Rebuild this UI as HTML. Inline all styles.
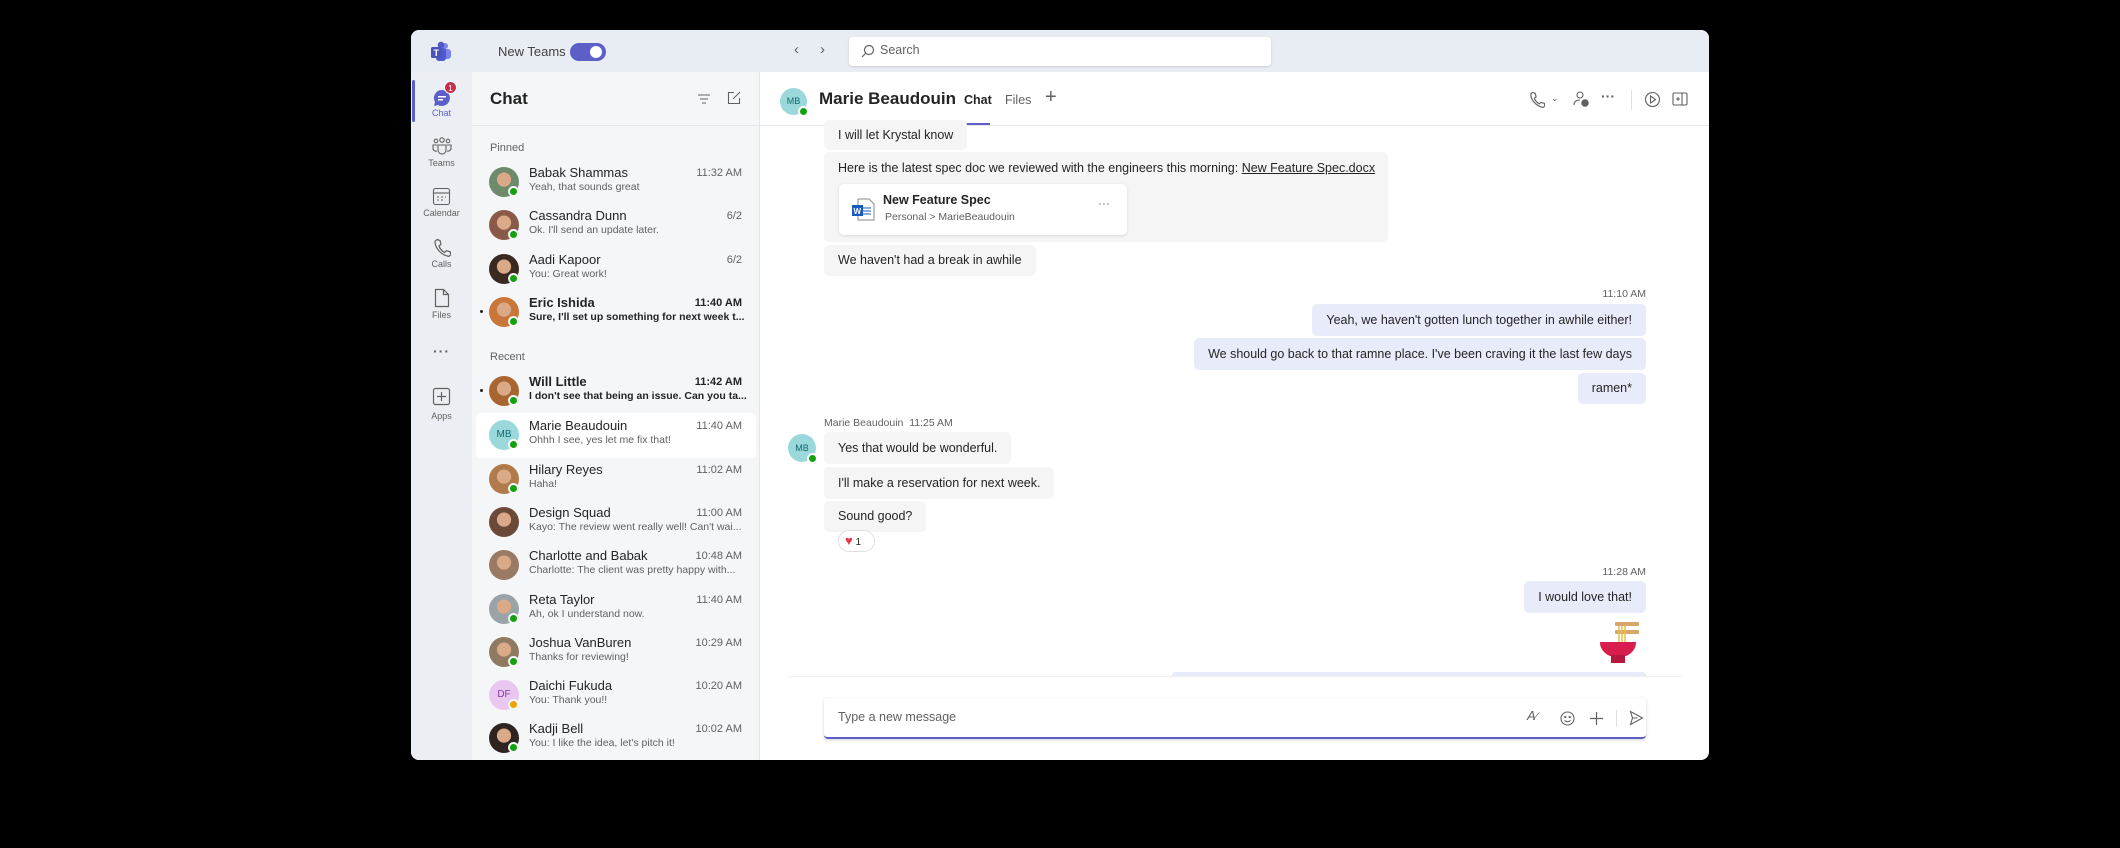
<!DOCTYPE html>
<html><head><meta charset="utf-8"><style>
*{margin:0;padding:0;box-sizing:border-box}
body{width:2120px;height:848px;background:#000;font-family:"Segoe UI","Liberation Sans",sans-serif;color:#242424;position:relative;overflow:hidden}
.a{position:absolute}
.win{left:411px;top:30px;width:1298px;height:730px;background:#fff;border-radius:8px;overflow:hidden}
.tb{left:0;top:0;width:1298px;height:42px;background:#e8ecf3}
.rail{left:0;top:42px;width:61px;height:688px;background:#ebeef3}
.list{left:61px;top:42px;width:288px;height:688px;background:#f5f6f8;border-right:1px solid #e3e5e9}
.ri{left:0;width:61px;text-align:center;font-size:9px;color:#616161}
.nm{font-size:13px;color:#242424;white-space:nowrap}
.pv{font-size:10.5px;color:#616161;white-space:nowrap}
.tm{font-size:11px;color:#616161;text-align:right}
.b .nm,.b .pv,.b .tm{font-weight:bold;color:#242424}
.av{width:30px;height:30px;border-radius:50%}
.st{width:11px;height:11px;border-radius:50%;background:#13a10e;border:2px solid #f5f6f8}
.bub{background:#f5f5f5;border-radius:5px;font-size:12.5px;padding:0 14px;line-height:32px;white-space:nowrap}
.me{background:#e8ebfa}
</style></head><body>
<div class="a win">
 <div class="a tb"></div>
 <svg class="a" style="left:19px;top:11px" width="22" height="22" viewBox="0 0 22 22"><circle cx="15" cy="5" r="3" fill="#7b83eb"/><circle cx="11" cy="4" r="3.3" fill="#5059c9"/><rect x="11" y="8" width="10" height="10" rx="3" fill="#7b83eb"/><rect x="6" y="7" width="10" height="13" rx="3" fill="#5059c9"/><rect x="1" y="6" width="11" height="11" rx="1.5" fill="#4b53bc"/><text x="3.5" y="15" font-size="9" font-weight="bold" fill="#fff" font-family="Liberation Sans">T</text></svg>
 <div class="a" style="left:87px;top:14px;font-size:13px;color:#424242">New Teams</div>
 <div class="a" style="left:159px;top:13px;width:36px;height:18px;border-radius:9px;background:#5b5fc7"><div class="a" style="left:20px;top:3px;width:12px;height:12px;border-radius:50%;background:#fff"></div></div>
 <div class="a" style="left:383px;top:11px;font-size:15px;color:#616161">&#8249;</div>
 <div class="a" style="left:409px;top:11px;font-size:15px;color:#616161">&#8250;</div>
 <div class="a" style="left:438px;top:7px;width:422px;height:29px;background:#fff;border-radius:4px;box-shadow:0 1px 2px rgba(0,0,0,.12)">
  <svg class="a" style="left:12px;top:7px" width="14" height="14" viewBox="0 0 14 14"><circle cx="8" cy="6" r="4.5" fill="none" stroke="#616161" stroke-width="1.2"/><path d="M5 9L1 13" stroke="#616161" stroke-width="1.2"/></svg>
  <div class="a" style="left:31px;top:6px;font-size:12.5px;color:#616161">Search</div>
 </div>

 <div class="a rail"></div>
 <div class="a" style="left:1px;top:50px;width:3px;height:42px;background:#5b5fc7;border-radius:2px"></div>
 <svg class="a" style="left:20px;top:57px" width="22" height="22" viewBox="0 0 22 22"><path d="M11 3a8 8 0 1 1-4 15l-4 1 1-4A8 8 0 0 1 11 3z" fill="#5b5fc7"/><rect x="7" y="9" width="8" height="1.5" fill="#fff"/><rect x="7" y="12" width="5" height="1.5" fill="#fff"/></svg>
 <div class="a" style="left:33px;top:51px;width:13px;height:13px;border-radius:50%;background:#c4314b;color:#fff;font-size:8px;text-align:center;line-height:13px;border:1px solid #fff">1</div>
 <div class="a ri" style="top:78px;color:#5b5fc7">Chat</div>
 <svg class="a" style="left:21px;top:106px" width="20" height="20" viewBox="0 0 20 20" fill="none" stroke="#616161" stroke-width="1.1"><circle cx="10" cy="4" r="2.2"/><circle cx="4" cy="5" r="1.8"/><circle cx="16" cy="5" r="1.8"/><path d="M6 9h8v5a4 4 0 0 1-8 0z"/><path d="M5 9H1v3a3 3 0 0 0 4 3M15 9h4v3a3 3 0 0 1-4 3"/></svg>
 <div class="a ri" style="top:128px">Teams</div>
 <svg class="a" style="left:21px;top:157px" width="19" height="19" viewBox="0 0 19 19" fill="none" stroke="#616161" stroke-width="1.1"><rect x="1.5" y="1.5" width="16" height="16" rx="2"/><path d="M1.5 6h16"/><path d="M5 10h2M9 10h2M13 10h1M5 13h2M9 13h2" /></svg>
 <div class="a ri" style="top:178px">Calendar</div>
 <svg class="a" style="left:22px;top:208px" width="18" height="19" viewBox="0 0 18 19" fill="none" stroke="#616161" stroke-width="1.2"><path d="M4 1.5l3 1 1 4-2 1.5c1 3 3 5 5.5 6.5l1.8-1.8 4 1.2.5 3-2 1.5C8 17 2 10 2 3.5z"/></svg>
 <div class="a ri" style="top:229px">Calls</div>
 <svg class="a" style="left:23px;top:258px" width="16" height="20" viewBox="0 0 16 20" fill="none" stroke="#616161" stroke-width="1.2"><path d="M1.5 1.5h8l5 5v12h-13z M9.5 1.5v5h5"/></svg>
 <div class="a ri" style="top:280px">Files</div>
 <div class="a ri" style="top:313px;font-size:14px;letter-spacing:1px;font-weight:bold">···</div>
 <svg class="a" style="left:21px;top:357px" width="19" height="19" viewBox="0 0 19 19" fill="none" stroke="#616161" stroke-width="1.2"><rect x="1.5" y="1.5" width="16" height="16" rx="2"/><path d="M9.5 5v9M5 9.5h9"/></svg>
 <div class="a ri" style="top:381px">Apps</div>

 <div class="a list"></div>
 <div class="a" style="left:61px;top:95px;width:288px;height:1px;background:#e6e8ec"></div>
 <div class="a" style="left:79px;top:59px;font-size:17px;font-weight:bold">Chat</div>
 <svg class="a" style="left:286px;top:63px" width="14" height="12" viewBox="0 0 14 12" stroke="#616161" stroke-width="1.1"><path d="M1 2h12M3 6h8M5 10h4"/></svg>
 <svg class="a" style="left:315px;top:60px" width="16" height="16" viewBox="0 0 16 16" fill="none" stroke="#616161" stroke-width="1.1"><path d="M8 2.5H2.5v11h11V8"/><path d="M7 9l7-7"/></svg>
 <div class="a" style="left:79px;top:112px;font-size:11px;color:#616161">Pinned</div>
 <div class="a" style="left:79px;top:321px;font-size:11px;color:#616161">Recent</div>
 <div class="a" style="left:65px;top:383px;width:280px;height:45px;background:#fff;border-radius:5px"></div>
 <div id="rows"></div>

 <div class="a" style="left:349px;top:95px;width:949px;height:1px;background:#e6e8ec"></div>
 <div class="a" style="left:369px;top:58px;width:27px;height:27px;border-radius:50%;background:#9ad8db;font-size:9px;color:#0e6a70;text-align:center;line-height:27px">MB</div>
 <div class="a st" style="left:387px;top:76px;border-color:#fff"></div>
 <div class="a" style="left:408px;top:59px;font-size:17px;font-weight:bold">Marie Beaudouin</div>
 <div class="a" style="left:553px;top:63px;font-size:12.5px;font-weight:600">Chat</div>
 <div class="a" style="left:553px;top:93px;width:26px;height:2px;background:#5b5fc7"></div>
 <div class="a" style="left:594px;top:63px;font-size:12.5px;color:#616161">Files</div>
 <div class="a" style="left:634px;top:56px;font-size:20px;color:#616161;font-weight:300">+</div>
 <svg class="a" style="left:1118px;top:61px" width="16" height="17" viewBox="0 0 18 19" fill="none" stroke="#616161" stroke-width="1.3"><path d="M4 1.5l3 1 1 4-2 1.5c1 3 3 5 5.5 6.5l1.8-1.8 4 1.2.5 3-2 1.5C8 17 2 10 2 3.5z"/></svg>
 <div class="a" style="left:1140px;top:63px;font-size:9px;color:#616161">&#8964;</div>
 <svg class="a" style="left:1161px;top:60px" width="18" height="18" viewBox="0 0 18 18" fill="none" stroke="#616161" stroke-width="1.1"><circle cx="8" cy="5" r="3"/><path d="M2 15c0-4 3-5 6-5"/><circle cx="13" cy="13" r="3.2" fill="#616161"/></svg>
 <div class="a" style="left:1190px;top:58px;font-size:14px;color:#616161;font-weight:bold">···</div>
 <div class="a" style="left:1220px;top:60px;width:1px;height:20px;background:#e0e0e0"></div>
 <svg class="a" style="left:1233px;top:61px" width="17" height="17" viewBox="0 0 17 17" fill="none" stroke="#616161" stroke-width="1.1"><circle cx="8.5" cy="8.5" r="7"/><path d="M6.5 5l5 3.5-5 3.5z"/></svg>
 <svg class="a" style="left:1261px;top:62px" width="16" height="14" viewBox="0 0 16 14" fill="none" stroke="#616161" stroke-width="1.1"><rect x="1" y="1" width="14" height="12" rx="1.5"/><path d="M10 1v12M4 7h4M6 5v4"/></svg>

 <div class="a bub" style="left:413px;top:90px;height:30px;line-height:30px">I will let Krystal know</div>
 <div class="a" style="left:413px;top:122px;width:564px;height:90px;background:#f5f5f5;border-radius:5px"></div>
 <div class="a" style="left:427px;top:131px;font-size:12.5px">Here is the latest spec doc we reviewed with the engineers this morning: <u>New Feature Spec.docx</u></div>
 <div class="a" style="left:428px;top:154px;width:288px;height:51px;background:#fff;border-radius:5px;box-shadow:0 1px 3px rgba(0,0,0,.12)">
  <svg class="a" style="left:11px;top:13px" width="26" height="26" viewBox="0 0 26 26"><path d="M8 2h11l5 5v16H8z" fill="#fff" stroke="#8a8a8a"/><path d="M13 11h8M13 14h8M13 17h8" stroke="#185abd"/><rect x="2" y="8" width="11" height="11" fill="#185abd"/><text x="3.5" y="17" font-size="8" fill="#fff" font-weight="bold" font-family="Liberation Sans">W</text></svg>
  <div class="a" style="left:44px;top:9px;font-size:12.5px;font-weight:600">New Feature Spec</div>
  <div class="a" style="left:46px;top:27px;font-size:10.5px;color:#616161">Personal &gt; MarieBeaudouin</div>
  <div class="a" style="left:259px;top:12px;font-size:12px;color:#616161">···</div>
 </div>
 <div class="a bub" style="left:413px;top:215px;height:31px;line-height:31px">We haven't had a break in awhile</div>

 <div class="a" style="left:1190px;top:258px;width:45px;text-align:right;font-size:10.5px;color:#616161">11:10 AM</div>
 <div class="a bub me" style="right:63px;top:274px">Yeah, we haven't gotten lunch together in awhile either!</div>
 <div class="a bub me" style="right:63px;top:308px">We should go back to that ramne place. I've been craving it the last few days</div>
 <div class="a bub me" style="right:63px;top:343px;height:31px;line-height:31px">ramen*</div>

 <div class="a" style="left:413px;top:387px;font-size:10.5px;color:#616161">Marie Beaudouin&nbsp;&nbsp;11:25 AM</div>
 <div class="a" style="left:377px;top:404px;width:28px;height:28px;border-radius:50%;background:#9ad8db;font-size:9px;color:#0e6a70;text-align:center;line-height:28px">MB</div>
 <div class="a st" style="left:396px;top:423px;border-color:#fff"></div>
 <div class="a bub" style="left:413px;top:402px">Yes that would be wonderful.</div>
 <div class="a bub" style="left:413px;top:437px">I'll make a reservation for next week.</div>
 <div class="a bub" style="left:413px;top:471px;height:31px;line-height:31px">Sound good?</div>
 <div class="a" style="left:427px;top:500px;width:37px;height:22px;border-radius:11px;background:#fff;border:1px solid #e0e0e0;font-size:10px;line-height:20px;padding-left:6px"><span style="color:#e8384f;font-size:13px">&#9829;</span> 1</div>

 <div class="a" style="left:1190px;top:536px;width:45px;text-align:right;font-size:10.5px;color:#616161">11:28 AM</div>
 <div class="a bub me" style="right:63px;top:551px">I would love that!</div>
 <svg class="a" style="left:1186px;top:588px" width="44" height="47" viewBox="0 0 44 47"><rect x="18" y="4" width="24" height="4" rx="1" fill="#d9a66b"/><rect x="18" y="12" width="24" height="4" rx="1" fill="#d9a66b"/><path d="M22 8v20M25 8v20M28 8v20" stroke="#e8c14a" stroke-width="1.5"/><path d="M3 24h36a18 15 0 0 1-10 14H13A18 15 0 0 1 3 24z" fill="#d81e4f"/><rect x="14" y="37" width="14" height="8" fill="#b5173f"/></svg>
 <div class="a" style="left:761px;top:642px;width:474px;height:5px;background:#e8ebfa;border-radius:3px 3px 0 0"></div>
 <div class="a" style="left:376px;top:646px;width:895px;height:1px;background:#eeeeee"></div>

 <div class="a" style="left:413px;top:668px;width:822px;height:41px;background:#fff;border-radius:4px;box-shadow:0 1px 3px rgba(0,0,0,.18);border-bottom:2px solid #5b5fc7">
  <div class="a" style="left:14px;top:12px;font-size:12.5px;color:#616161">Type a new message</div>
  <div class="a" style="left:703px;top:10px;font-size:13px;color:#616161;font-style:italic">A<span style="font-size:11px">⁄</span></div>
  <svg class="a" style="left:736px;top:13px" width="15" height="15" viewBox="0 0 15 15" fill="none" stroke="#616161" stroke-width="1.1"><circle cx="7.5" cy="7.5" r="6.5"/><circle cx="5.3" cy="6" r=".6" fill="#616161"/><circle cx="9.7" cy="6" r=".6" fill="#616161"/><path d="M4.5 9.3c1.5 1.8 4.5 1.8 6 0"/></svg>
  <svg class="a" style="left:765px;top:13px" width="15" height="15" viewBox="0 0 15 15" stroke="#616161" stroke-width="1.2"><path d="M7.5 1v13M1 7.5h13"/></svg>
  <div class="a" style="left:792px;top:12px;width:1px;height:17px;background:#e0e0e0"></div>
  <svg class="a" style="left:805px;top:12px" width="15" height="16" viewBox="0 0 15 16" fill="none" stroke="#616161" stroke-width="1.1"><path d="M1.5 1.5l12 6.5-12 6.5 2-6.5z M3.5 8h5"/></svg>
 </div>
</div>
<script>
var rows=[
[175,"Babak Shammas","Yeah, that sounds great","11:32 AM","#6d8a6a",0,1],
[218,"Cassandra Dunn","Ok. I'll send an update later.","6/2","#8a5a48",0,1],
[262,"Aadi Kapoor","You: Great work!","6/2","#3b2a22",0,1],
[305,"Eric Ishida","Sure, I'll set up something for next week t...","11:40 AM","#c8763a",1,1],
[384,"Will Little","I don't see that being an issue. Can you ta...","11:42 AM","#a8652f",1,1],
[428,"Marie Beaudouin","Ohhh I see, yes let me fix that!","11:40 AM","MB",0,1],
[472,"Hilary Reyes","Haha!","11:02 AM","#b07a4a",0,1],
[515,"Design Squad","Kayo: The review went really well! Can't wai...","11:00 AM","#6b4a3a",0,0],
[558,"Charlotte and Babak","Charlotte: The client was pretty happy with...","10:48 AM","#9a7a62",0,0],
[602,"Reta Taylor","Ah, ok I understand now.","11:40 AM","#9aa3a8",0,1],
[645,"Joshua VanBuren","Thanks for reviewing!","10:29 AM","#8f7a60",0,1],
[688,"Daichi Fukuda","You: Thank you!!","10:20 AM","DF",0,2],
[731,"Kadji Bell","You: I like the idea, let's pitch it!","10:02 AM","#2e2420",0,1]];
var h="";
rows.forEach(function(r){
 var y=r[0]-30, cls=r[5]?"a b":"a";
 var av;
 if(r[4]=="MB") av='<div class="a av" style="left:78px;top:'+(y-8)+'px;background:#9ad8db;color:#0e6a70;font-size:10px;text-align:center;line-height:30px">MB</div>';
 else if(r[4]=="DF") av='<div class="a av" style="left:78px;top:'+(y-8)+'px;background:#e9c7f0;color:#8a3a9b;font-size:10px;text-align:center;line-height:30px">DF</div>';
 else av='<div class="a av" style="left:78px;top:'+(y-8)+'px;background:radial-gradient(circle at 50% 42%,#d9a988 0 30%,'+r[4]+' 32%)"></div>';
 h+='<div class="'+cls+'" style="left:0;top:0">'+av;
 if(r[6]) h+='<div class="a st" style="left:97px;top:'+(y+11)+'px;'+(r[6]==2?'background:#eaa300;':'')+'border-color:'+(r[1]=="Marie Beaudouin"?'#fff':'#f5f6f8')+'"></div>';
 if(r[5]) h+='<div class="a" style="left:69px;top:'+(y+5)+'px;width:3px;height:3px;border-radius:50%;background:#242424"></div>';
 h+='<div class="a nm" style="left:118px;top:'+(y-10)+'px">'+r[1]+'</div>';
 h+='<div class="a pv" style="left:118px;top:'+(y+6)+'px">'+r[2]+'</div>';
 h+='<div class="a tm" style="left:0;width:331px;top:'+(y-8)+'px">'+r[3]+'</div></div>';
});
var c=document.getElementById("rows");c.outerHTML='<div class="a" style="left:0;top:0;width:349px;height:730px">'+h+'</div>';
</script>
</body></html>
